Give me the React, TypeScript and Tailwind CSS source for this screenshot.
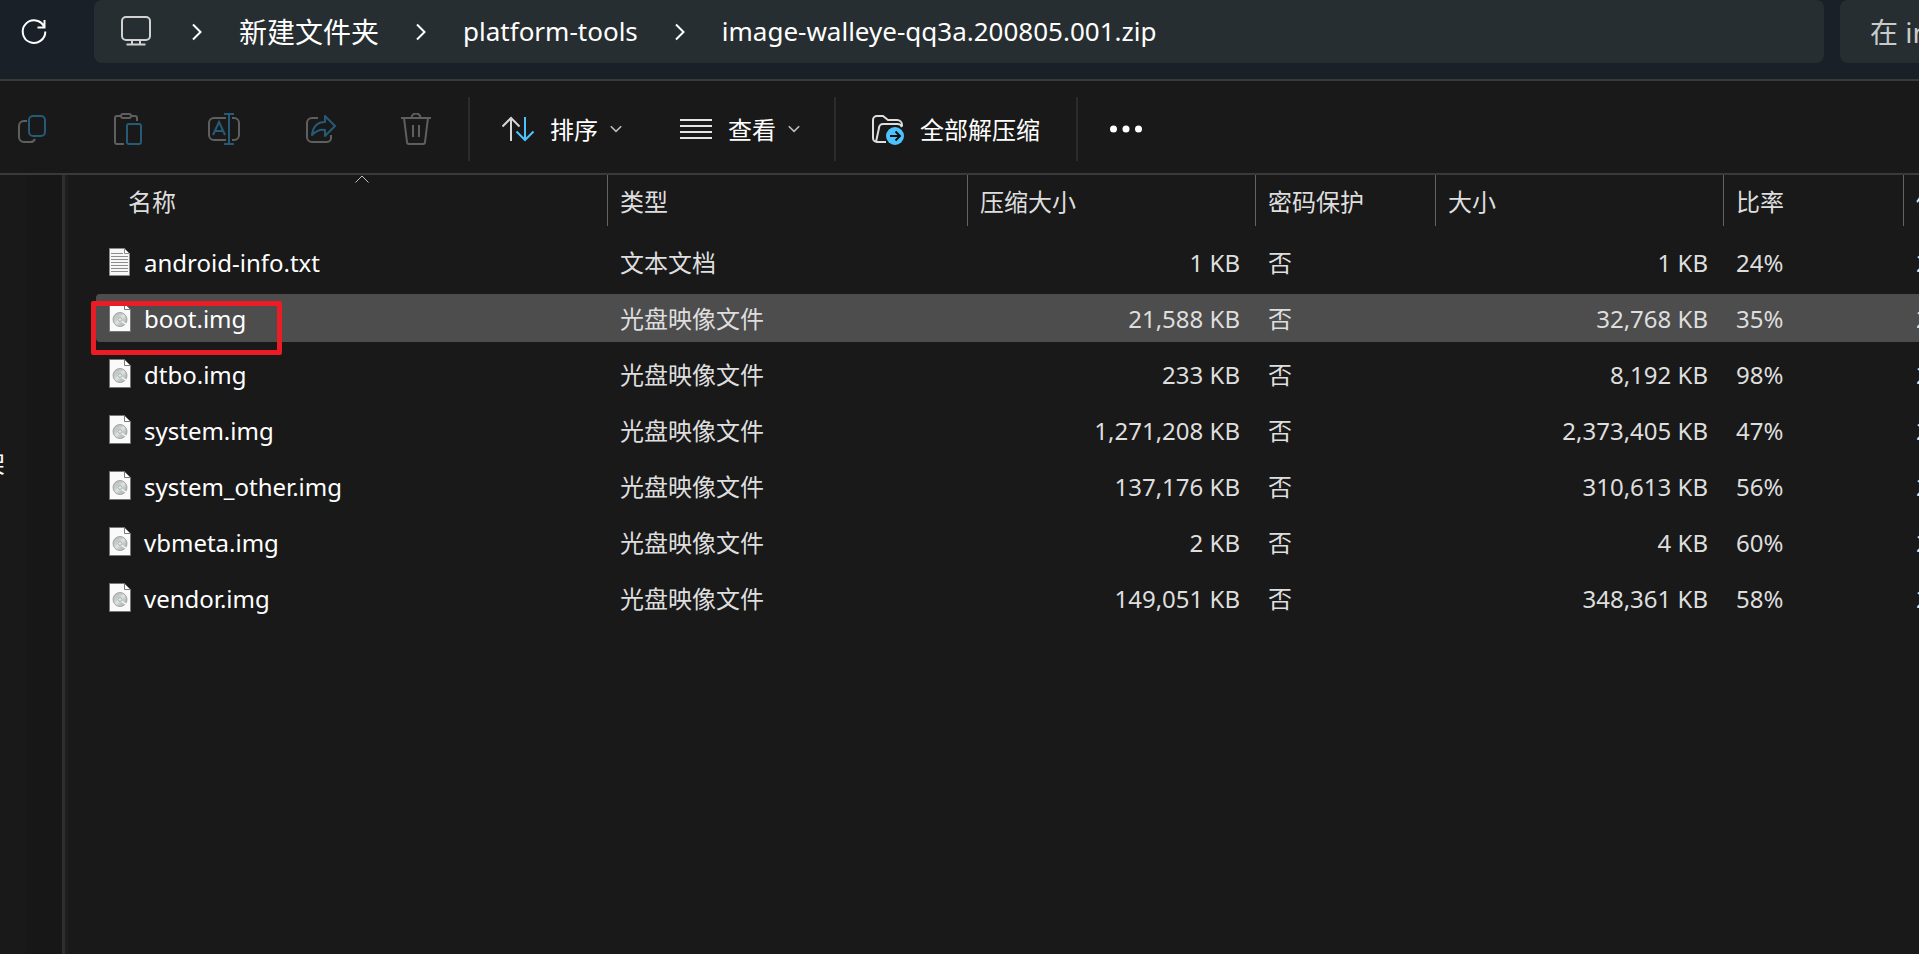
import type { ReactNode } from 'react'

type FileRow = {
  name: string
  kind: 'txt' | 'img'
  type: string
  packed: string
  size: string
  ratio: string
  selected?: boolean
}

const files: FileRow[] = [
  { name: 'android-info.txt', kind: 'txt', type: '文本文档', packed: '1 KB', size: '1 KB', ratio: '24%' },
  { name: 'boot.img', kind: 'img', type: '光盘映像文件', packed: '21,588 KB', size: '32,768 KB', ratio: '35%', selected: true },
  { name: 'dtbo.img', kind: 'img', type: '光盘映像文件', packed: '233 KB', size: '8,192 KB', ratio: '98%' },
  { name: 'system.img', kind: 'img', type: '光盘映像文件', packed: '1,271,208 KB', size: '2,373,405 KB', ratio: '47%' },
  { name: 'system_other.img', kind: 'img', type: '光盘映像文件', packed: '137,176 KB', size: '310,613 KB', ratio: '56%' },
  { name: 'vbmeta.img', kind: 'img', type: '光盘映像文件', packed: '2 KB', size: '4 KB', ratio: '60%' },
  { name: 'vendor.img', kind: 'img', type: '光盘映像文件', packed: '149,051 KB', size: '348,361 KB', ratio: '58%' },
]

const columns = [
  { label: '名称', width: 'w-[512px]' },
  { label: '类型', width: 'w-[360px]' },
  { label: '压缩大小', width: 'w-[288px]' },
  { label: '密码保护', width: 'w-[180px]' },
  { label: '大小', width: 'w-[288px]' },
  { label: '比率', width: 'w-[180px]' },
  { label: '修改日期', width: 'w-[240px]' },
]

function Icon({ children }: { children: ReactNode }) {
  return (
    <svg viewBox="0 0 32 32" className="size-8 shrink-0" fill="none" stroke="#5f5f5f" strokeWidth="2" aria-hidden="true">
      {children}
    </svg>
  )
}

function Crumb() {
  return (
    <svg viewBox="0 0 10 18" className="h-[18px] w-[10px] shrink-0" fill="none" stroke="#fff" strokeWidth="2" aria-hidden="true">
      <path d="M1 1.5 8.5 9 1 16.5" />
    </svg>
  )
}

function DownChevron() {
  return (
    <svg viewBox="0 0 12 12" className="size-3 shrink-0" fill="none" stroke="#bdbdbd" strokeWidth="1.6" aria-hidden="true">
      <path d="M.8 3.2 6 8.4l5.2-5.2" />
    </svg>
  )
}

function Divider() {
  return <div className="h-16 w-0.5 shrink-0 bg-[#2b2b2b]" />
}

function TextFileIcon() {
  return (
    <svg viewBox="0 0 24 32" className="h-8 w-6 shrink-0" aria-hidden="true">
      <path d="M1.5 2.5h15l5 5v22h-20z" fill="#f7f7f7" stroke="#8a8a8a" />
      <path d="M16.5 2.5v5h5z" fill="#fff" stroke="#8a8a8a" />
      <path d="M3 7.500h12M3 10.5h17M3 13.5h17M3 16.5h17M3 19.5h17M3 22.5h17M3 25.5h17" stroke="#8d8d8d" />
    </svg>
  )
}

function DiscImageIcon() {
  return (
    <svg viewBox="0 0 24 32" className="h-8 w-6 shrink-0" aria-hidden="true">
      <defs>
        <linearGradient id="disc" x1="0" y1="0" x2="1" y2="1">
          <stop offset="0" stopColor="#b4b7b6" />
          <stop offset=".35" stopColor="#c6cac8" />
          <stop offset=".5" stopColor="#dbe5e1" />
          <stop offset=".65" stopColor="#c3cac7" />
          <stop offset="1" stopColor="#a4a7a6" />
        </linearGradient>
      </defs>
      <path d="M1.5 1.5h15l6 6v22h-21z" fill="#fafafa" stroke="#777" />
      <path d="M16.500 1.500v6h6z" fill="#fff" stroke="#777" />
      <circle cx="12" cy="17.5" r="7" fill="url(#disc)" stroke="#a3a6a5" />
      <path d="m13.500 19 4.200 3.200" stroke="#f4f6f5" strokeWidth="1.5" />
      <circle cx="12" cy="17.5" r="1.8" fill="#e4e8e6" stroke="#b0b4b2" />
    </svg>
  )
}

function AddressBar() {
  return (
    <header className="flex h-[81px] items-start border-b-2 border-[#3a3a3a] bg-[#1a2027]">
      <button type="button" aria-label="刷新" className="ml-[18px] flex h-[63px] w-8 shrink-0 items-center justify-center">
        <svg viewBox="0 0 32 32" className="size-8" fill="none" stroke="#fff" strokeWidth="2" aria-hidden="true">
          <path d="M26.300 11A11.300 11.300 0 1 0 27.300 15.500M26.500 4v7.500h-7" />
        </svg>
      </button>
      <nav className="ml-11 flex h-[63px] min-w-0 flex-1 items-center rounded-lg bg-[#272e31] pl-[26px] text-[28px] whitespace-nowrap text-white">
        <a href="#pc" aria-label="此电脑" className="shrink-0">
          <svg viewBox="0 0 32 32" className="size-8" fill="none" stroke="#d2d2d2" strokeWidth="2" aria-hidden="true">
            <rect x="2" y="1" width="28" height="23" rx="4" />
            <path d="M12 24v4.500M20 24v4.500M6.500 28.500h19" />
          </svg>
        </a>
        <span className="ml-10 flex items-center gap-[37px]">
          <Crumb />
          <a href="#folder">新建文件夹</a>
          <Crumb />
          <a href="#platform-tools" className="text-[26px]">platform-tools</a>
          <Crumb />
          <a href="#zip" className="text-[26px]">image-walleye-qq3a.200805.001.zip</a>
        </span>
      </nav>
      <input
        type="text"
        aria-label="搜索"
        placeholder="在 image-walleye-qq3a.200805.001.zip 中搜索"
        className="ml-4 h-[63px] w-[79px] rounded-l-lg bg-[#272e31] pl-[30px] text-[28px] text-white placeholder:text-[#c8cacb]"
      />
    </header>
  )
}

function Toolbar() {
  return (
    <div className="flex h-[94px] items-center border-b-2 border-[#3a3a3a] pt-1 pl-4 text-2xl whitespace-nowrap text-white">
      <div className="mr-9 flex items-center gap-16">
        <button type="button" aria-label="复制">
          <Icon>
            <path d="M11 8H8a5 5 0 0 0-5 5v11a5 5 0 0 0 5 5h6a5 5 0 0 0 5-3" />
            <rect x="13" y="3" width="16" height="20" rx="4" stroke="#265a76" />
          </Icon>
        </button>
        <button type="button" aria-label="粘贴">
          <Icon>
            <path d="M8 3H5a2 2 0 0 0-2 2v24a2 2 0 0 0 2 2h7M20 3h3a2 2 0 0 1 2 2v3" />
            <rect x="9" y="1" width="10" height="4" rx="2" />
            <rect x="15" y="11" width="14" height="20" rx="2" stroke="#265a76" />
          </Icon>
        </button>
        <button type="button" aria-label="重命名">
          <Icon>
            <path d="M18 5H6a5 5 0 0 0-5 5v12a5 5 0 0 0 5 5h12M24 5h2a5 5 0 0 1 5 5v12a5 5 0 0 1-5 5h-2" />
            <path d="M21 1v30M16 1h10M16 31h10M5 22l6-13 6 13M7 18h8" stroke="#265a76" />
          </Icon>
        </button>
        <button type="button" aria-label="共享">
          <Icon>
            <path d="M14 5H8a5 5 0 0 0-5 5v14a5 5 0 0 0 5 5h15a4 4 0 0 0 4-4v-3" />
            <path d="M21 3v6C13 9 9 14 8 22c4-4 8-6 13-5v6l10-10z" stroke="#265a76" strokeLinejoin="round" />
          </Icon>
        </button>
        <button type="button" aria-label="删除">
          <Icon>
            <path d="M1 5h30M11.500 5a4.500 4.500 0 0 1 9 0M4 5l3 24a2 2 0 0 0 2 2h14a2 2 0 0 0 2-2l3-24M13 12v12M19 12v12" />
          </Icon>
        </button>
      </div>
      <Divider />
      <button type="button" className="ml-8 flex items-center">
        <Icon>
          <path d="M9 28V5M.5 13.500 9 5l8.500 8.500" stroke="#d6d6d6" />
          <path d="M23 4v23M14.500 18.500 23 27l8.500-8.500" stroke="#4cc2ff" />
        </Icon>
        <span className="mr-3 ml-4 pt-0.5">排序</span>
        <DownChevron />
      </button>
      <button type="button" className="mr-[34px] ml-[58px] flex items-center">
        <Icon>
          <path d="M0 7h32M0 13h32M0 19h32M0 25h32" stroke="#e4e4e4" />
        </Icon>
        <span className="mr-3 ml-4 pt-0.5">查看</span>
        <DownChevron />
      </button>
      <Divider />
      <button type="button" className="mx-9 flex items-center gap-4">
        <Icon>
          <path d="M14 29H5a4 4 0 0 1-4-4V7a4 4 0 0 1 4-4h6l5 4h9a5 5 0 0 1 5 5v1M4 29 7 15a4 4 0 0 1 4-4h14a5 5 0 0 1 5 3" stroke="#dedede" />
          <circle cx="23" cy="23" r="9" fill="#4cc2ff" stroke="none" />
          <path d="M18 23h9M23.500 18.500l4.500 4.500-4.500 4.500" stroke="#111" />
        </Icon>
        <span className="pt-0.5">全部解压缩</span>
      </button>
      <Divider />
      <button type="button" aria-label="查看更多" className="ml-8">
        <svg viewBox="0 0 32 32" className="size-8" fill="#fff" aria-hidden="true">
          <circle cx="3.500" cy="16" r="3.500" />
          <circle cx="16" cy="16" r="3.500" />
          <circle cx="28.500" cy="16" r="3.500" />
        </svg>
      </button>
    </div>
  )
}

function FileTable() {
  return (
    <table className="w-[2048px] table-fixed border-collapse text-2xl whitespace-nowrap text-[#dedede]">
      <thead>
        <tr>
          {columns.map((col, i) => (
            <th key={col.label} className={`p-0 pb-2 text-left font-normal ${col.width} ${i === 0 ? 'pl-5' : ''}`}>
              <div className="relative flex h-[51px] items-center border-r border-[#636363] pt-0.5 pl-3">
                {col.label}
                {i === 0 && (
                  <svg viewBox="0 0 14 8" className="absolute top-0 left-1/2 h-2 w-3.5 -translate-x-1/2" fill="none" stroke="#c0c0c0" aria-hidden="true">
                    <path d="M.5 7.500 7 1l6.500 6.500" />
                  </svg>
                )}
              </div>
            </th>
          ))}
        </tr>
      </thead>
      <tbody>
        {files.map((file) => {
          const cell = `flex h-12 items-center ${file.selected ? 'bg-[#4d4d4d]' : ''}`
          return (
            <tr key={file.name}>
              <td className="px-0 py-1">
                <div className={`relative gap-3 rounded-l-sm pl-3 text-white ${cell}`}>
                  {file.kind === 'txt' ? <TextFileIcon /> : <DiscImageIcon />}
                  <span className="pt-0.5">{file.name}</span>
                  {file.selected && (
                    <span className="absolute top-[7px] -left-[5px] h-[54px] w-[191px] rounded-xs border-5 border-[#ed1c24]" />
                  )}
                </div>
              </td>
              <td className="px-0 py-1"><div className={`pt-0.5 pl-3 ${cell}`}>{file.type}</div></td>
              <td className="px-0 py-1"><div className={`justify-end pt-0.5 pr-4 ${cell}`}>{file.packed}</div></td>
              <td className="px-0 py-1"><div className={`pt-0.5 pl-3 ${cell}`}>否</div></td>
              <td className="px-0 py-1"><div className={`justify-end pt-0.5 pr-4 ${cell}`}>{file.size}</div></td>
              <td className="px-0 py-1"><div className={`pt-0.5 pl-3 ${cell}`}>{file.ratio}</div></td>
              <td className="px-0 py-1"><div className={`pt-0.5 pl-3 ${cell}`}>2</div></td>
            </tr>
          )
        })}
      </tbody>
    </table>
  )
}

export default function App() {
  return (
    <div className="flex h-screen flex-col overflow-hidden bg-[#191919] font-['Noto_Sans','Noto_Sans_CJK_SC',sans-serif]">
      <AddressBar />
      <Toolbar />
      <main className="flex min-h-0 flex-1">
        {/* Navigation pane, scrolled almost out of view */}
        <aside className="flex w-[62px] shrink-0 overflow-hidden bg-[#171717]">
          <div className="flex w-[26px] justify-end bg-[#191919] pt-[273px] pr-[21px] text-2xl text-white">
            <span>架</span>
          </div>
        </aside>
        <div className="w-[6px] shrink-0 border-l-3 border-[#2e2e2e] bg-[#1e1e1e]" />
        <section className="min-w-0 flex-1 overflow-hidden pl-7">
          <FileTable />
        </section>
      </main>
    </div>
  )
}
